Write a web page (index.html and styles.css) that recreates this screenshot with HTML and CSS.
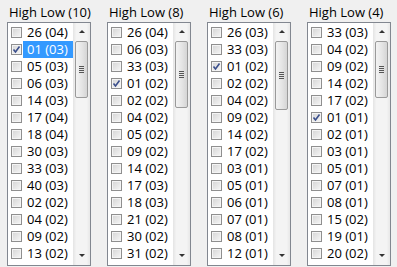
FILE: index.html
```html
<!DOCTYPE html>
<html lang="en">
<head>
    <meta charset="UTF-8">
    <title>High Low</title>
    <link rel="stylesheet" href="styles.css">
</head>
<body>
    <div class="panel">
        <div class="column">
            <div class="title">High Low (10)</div>
            <div class="listbox">
                <div class="items">
                    <div class="row"><span class="check"></span><span class="label">26 (04)</span></div>
                    <div class="row"><span class="check checked"><svg viewBox="0 0 9 9"><path d="M1.5 4.5 L3.5 7 L7.5 1.5"/></svg></span><span class="label selected">01 (03)</span></div>
                    <div class="row"><span class="check"></span><span class="label">05 (03)</span></div>
                    <div class="row"><span class="check"></span><span class="label">06 (03)</span></div>
                    <div class="row"><span class="check"></span><span class="label">14 (03)</span></div>
                    <div class="row"><span class="check"></span><span class="label">17 (04)</span></div>
                    <div class="row"><span class="check"></span><span class="label">18 (04)</span></div>
                    <div class="row"><span class="check"></span><span class="label">30 (03)</span></div>
                    <div class="row"><span class="check"></span><span class="label">33 (03)</span></div>
                    <div class="row"><span class="check"></span><span class="label">40 (03)</span></div>
                    <div class="row"><span class="check"></span><span class="label">02 (02)</span></div>
                    <div class="row"><span class="check"></span><span class="label">04 (02)</span></div>
                    <div class="row"><span class="check"></span><span class="label">09 (02)</span></div>
                    <div class="row"><span class="check"></span><span class="label">13 (02)</span></div>
                </div>
                <div class="scrollbar">
                    <div class="arrow up"></div>
                    <div class="track"><div class="thumb" style="height: 57px"><span class="grip"></span></div></div>
                    <div class="arrow down"></div>
                </div>
            </div>
        </div>

        <div class="column">
            <div class="title">High Low (8)</div>
            <div class="listbox">
                <div class="items">
                    <div class="row"><span class="check"></span><span class="label">26 (04)</span></div>
                    <div class="row"><span class="check"></span><span class="label">06 (03)</span></div>
                    <div class="row"><span class="check"></span><span class="label">33 (03)</span></div>
                    <div class="row"><span class="check checked"><svg viewBox="0 0 9 9"><path d="M1.5 4.5 L3.5 7 L7.5 1.5"/></svg></span><span class="label">01 (02)</span></div>
                    <div class="row"><span class="check"></span><span class="label">02 (02)</span></div>
                    <div class="row"><span class="check"></span><span class="label">04 (02)</span></div>
                    <div class="row"><span class="check"></span><span class="label">05 (02)</span></div>
                    <div class="row"><span class="check"></span><span class="label">09 (02)</span></div>
                    <div class="row"><span class="check"></span><span class="label">14 (02)</span></div>
                    <div class="row"><span class="check"></span><span class="label">17 (03)</span></div>
                    <div class="row"><span class="check"></span><span class="label">18 (03)</span></div>
                    <div class="row"><span class="check"></span><span class="label">21 (02)</span></div>
                    <div class="row"><span class="check"></span><span class="label">30 (02)</span></div>
                    <div class="row"><span class="check"></span><span class="label">31 (02)</span></div>
                </div>
                <div class="scrollbar">
                    <div class="arrow up"></div>
                    <div class="track"><div class="thumb" style="height: 67px"><span class="grip"></span></div></div>
                    <div class="arrow down"></div>
                </div>
            </div>
        </div>

        <div class="column">
            <div class="title">High Low (6)</div>
            <div class="listbox">
                <div class="items">
                    <div class="row"><span class="check"></span><span class="label">26 (03)</span></div>
                    <div class="row"><span class="check"></span><span class="label">33 (03)</span></div>
                    <div class="row"><span class="check checked"><svg viewBox="0 0 9 9"><path d="M1.5 4.5 L3.5 7 L7.5 1.5"/></svg></span><span class="label">01 (02)</span></div>
                    <div class="row"><span class="check"></span><span class="label">02 (02)</span></div>
                    <div class="row"><span class="check"></span><span class="label">04 (02)</span></div>
                    <div class="row"><span class="check"></span><span class="label">09 (02)</span></div>
                    <div class="row"><span class="check"></span><span class="label">14 (02)</span></div>
                    <div class="row"><span class="check"></span><span class="label">17 (02)</span></div>
                    <div class="row"><span class="check"></span><span class="label">03 (01)</span></div>
                    <div class="row"><span class="check"></span><span class="label">05 (01)</span></div>
                    <div class="row"><span class="check"></span><span class="label">06 (01)</span></div>
                    <div class="row"><span class="check"></span><span class="label">07 (01)</span></div>
                    <div class="row"><span class="check"></span><span class="label">08 (01)</span></div>
                    <div class="row"><span class="check"></span><span class="label">12 (01)</span></div>
                </div>
                <div class="scrollbar">
                    <div class="arrow up"></div>
                    <div class="track"><div class="thumb" style="height: 69px"><span class="grip"></span></div></div>
                    <div class="arrow down"></div>
                </div>
            </div>
        </div>

        <div class="column">
            <div class="title">High Low (4)</div>
            <div class="listbox">
                <div class="items">
                    <div class="row"><span class="check"></span><span class="label">33 (03)</span></div>
                    <div class="row"><span class="check"></span><span class="label">04 (02)</span></div>
                    <div class="row"><span class="check"></span><span class="label">09 (02)</span></div>
                    <div class="row"><span class="check"></span><span class="label">14 (02)</span></div>
                    <div class="row"><span class="check"></span><span class="label">17 (02)</span></div>
                    <div class="row"><span class="check checked"><svg viewBox="0 0 9 9"><path d="M1.5 4.5 L3.5 7 L7.5 1.5"/></svg></span><span class="label">01 (01)</span></div>
                    <div class="row"><span class="check"></span><span class="label">02 (01)</span></div>
                    <div class="row"><span class="check"></span><span class="label">03 (01)</span></div>
                    <div class="row"><span class="check"></span><span class="label">05 (01)</span></div>
                    <div class="row"><span class="check"></span><span class="label">07 (01)</span></div>
                    <div class="row"><span class="check"></span><span class="label">08 (01)</span></div>
                    <div class="row"><span class="check"></span><span class="label">15 (02)</span></div>
                    <div class="row"><span class="check"></span><span class="label">19 (01)</span></div>
                    <div class="row"><span class="check"></span><span class="label">20 (02)</span></div>
                </div>
                <div class="scrollbar">
                    <div class="arrow up"></div>
                    <div class="track"><div class="thumb" style="height: 57px"><span class="grip"></span></div></div>
                    <div class="arrow down"></div>
                </div>
            </div>
        </div>
    </div>
</body>
</html>
```

FILE: styles.css
```css
body {
    margin: 0;
    background: #f0f0f0;
    font-family: "Open Sans", "Liberation Sans", sans-serif;
    font-size: 13px;
    color: #000;
}
.panel {
    display: flex;
    gap: 16px;
    padding-left: 7px;
}
.column {
    width: 84px;
}
.title {
    height: 18px;
    line-height: 18px;
    padding: 3px 0 1px 2px;
    white-space: nowrap;
}
.listbox {
    display: flex;
    height: 242px;
    border: 1px solid #828790;
    background: #fff;
    overflow: hidden;
}
.items {
    flex: 1;
    padding-top: 1px;
    overflow: hidden;
}
.row {
    display: flex;
    align-items: center;
    height: 17px;
}
.check {
    display: flex;
    align-items: center;
    justify-content: center;
    box-sizing: border-box;
    width: 11px;
    height: 11px;
    margin: 0 1px 0 3px;
    border: 1px solid #8f8f8f;
    background: linear-gradient(135deg, #d4d4d4, #f6f6f6);
    box-shadow: inset 0 0 0 1px #f4f4f4;
}
.check svg {
    width: 9px;
    height: 9px;
    fill: none;
    stroke: #3b4f8c;
    stroke-width: 1.6;
}
.label {
    flex: 1;
    height: 17px;
    line-height: 17px;
    padding-left: 4px;
    white-space: nowrap;
}
.label.selected {
    background: #3399ff;
    color: #fff;
}
.scrollbar {
    display: flex;
    flex-direction: column;
    width: 17px;
    background: linear-gradient(to right, #e4e4e4, #f4f4f4 20%, #f4f4f4 80%, #e8e8e8);
}
.arrow {
    display: flex;
    justify-content: center;
    height: 17px;
}
.arrow::before {
    content: "";
    width: 0;
    height: 0;
    border-left: 3px solid transparent;
    border-right: 3px solid transparent;
}
.arrow.up {
    align-items: center;
}
.arrow.up::before {
    border-bottom: 3px solid #333;
    margin-top: -1px;
}
.arrow.down {
    align-items: center;
}
.arrow.down::before {
    border-top: 3px solid #333;
    margin-top: -3px;
}
.track {
    flex: 1;
    padding: 1px 2px 0;
}
.thumb {
    display: flex;
    align-items: center;
    justify-content: center;
    box-sizing: border-box;
    border: 1px solid #9a9a9a;
    border-radius: 2px;
    background: linear-gradient(to right, #f3f3f3, #e6e6e6 50%, #d5d5d5);
}
.grip {
    width: 5px;
    height: 7px;
    background: repeating-linear-gradient(to bottom, #555 0, #555 1px, transparent 1px, transparent 2px);
}
```
